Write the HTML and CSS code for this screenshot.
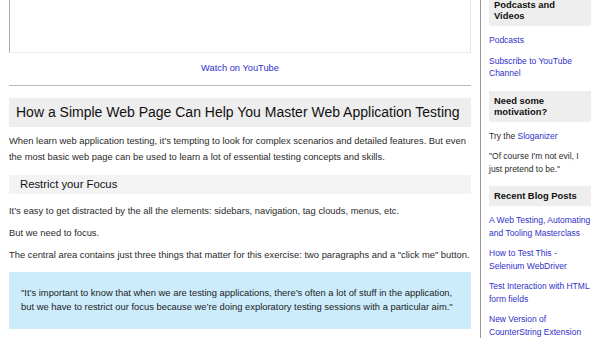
FILE: index.html
```html
<!DOCTYPE html>
<html lang="en">
<head>
  <meta charset="UTF-8">
  <title>How a Simple Web Page Can Help You Master Web Application Testing</title>
  <link rel="stylesheet" href="styles.css">
</head>
<body>

  <div class="page">

    <div class="content">
      <!-- embedded video frame -->
      <div class="video-frame"></div>
      <div class="video-link"><a href="#">Watch on YouTube</a></div>
      <hr>

      <h2>How a Simple Web Page Can Help You Master Web Application Testing</h2>

      <p>When learn web application testing, it’s tempting to look for complex scenarios and detailed features. But even the most basic web page can be used to learn a lot of essential testing concepts and skills.</p>

      <h3>Restrict your Focus</h3>

      <p class="first">It’s easy to get distracted by the all the elements: sidebars, navigation, tag clouds, menus, etc.</p>
      <p>But we need to focus.</p>
      <p>The central area contains just three things that matter for this exercise: two paragraphs and a "click me" button.</p>

      <blockquote>"It’s important to know that when we are testing applications, there’s often a lot of stuff in the application, but we have to restrict our focus because we’re doing exploratory testing sessions with a particular aim."</blockquote>
    </div>

    <div class="sidebar">
      <h4 class="top">Podcasts and Videos</h4>
      <p><a href="#">Podcasts</a></p>
      <p><a href="#">Subscribe to YouTube Channel</a></p>

      <h4>Need some motivation?</h4>
      <p>Try the <a href="#">Sloganizer</a></p>
      <p>"Of course I'm not evil, I just pretend to be."</p>

      <h4>Recent Blog Posts</h4>
      <p><a href="#">A Web Testing, Automating and Tooling Masterclass</a></p>
      <p><a href="#">How to Test This - Selenium WebDriver</a></p>
      <p><a href="#">Test Interaction with HTML form fields</a></p>
      <p><a href="#">New Version of CounterString Extension</a></p>
    </div>

  </div>

</body>
</html>
```

FILE: styles.css
```css
* {
  box-sizing: border-box;
  font-family: 'Liberation Sans', Arial, sans-serif;
}

body {
  margin: 0;
  padding: 0;
  background-color: #fff;
  color: #2a2a2a;
  overflow: hidden;
}

a {
  color: #3030c8;
  text-decoration: none;
}

.page {
  display: flex;
  align-items: flex-start;
  padding-left: 9px;
}

.content {
  width: 462px;
  font-size: 9.4px;
}

.video-frame {
  height: 53px;
  border-left: 1px solid #a8a8a8;
  border-right: 1px solid #e4e4e4;
  border-bottom: 1px solid #ececec;
}

.video-link {
  text-align: center;
  font-size: 9.3px;
  line-height: 14px;
  margin-top: 8px;
}

hr {
  border: none;
  border-top: 1px solid #bbb;
  margin: 10px 0 0;
}

h2 {
  margin: 12px 0 0;
  padding: 5px 7px;
  background-color: #eee;
  font-size: 14px;
  line-height: 19px;
  font-weight: normal;
  color: #111;
  white-space: nowrap;
}

h3 {
  margin: 10px 0 0;
  padding: 2px 11px;
  background-color: #f3f3f3;
  font-size: 11.3px;
  line-height: 15px;
  font-weight: normal;
  color: #111;
}

.content p {
  margin: 6px 0 0;
  line-height: 16px;
}

.content p.first {
  margin-top: 9px;
}

blockquote {
  margin: 9px 0 0;
  padding: 14px 12px 16px;
  background-color: #ccecfc;
  line-height: 13.5px;
  color: #222;
}

.sidebar {
  margin-left: 9px;
  border-left: 1px solid #999;
  padding-left: 8px;
  width: 111px;
  min-height: 338px;
  font-size: 8.5px;
}

.sidebar h4 {
  margin: 11px 0 0;
  padding: 4px 5px 5px;
  background-color: #eee;
  font-size: 9.4px;
  line-height: 11px;
  color: #111;
}

.sidebar h4.top {
  margin-top: -5px;
}

.sidebar p {
  margin: 8px 0 0;
  line-height: 12.5px;
}
```
